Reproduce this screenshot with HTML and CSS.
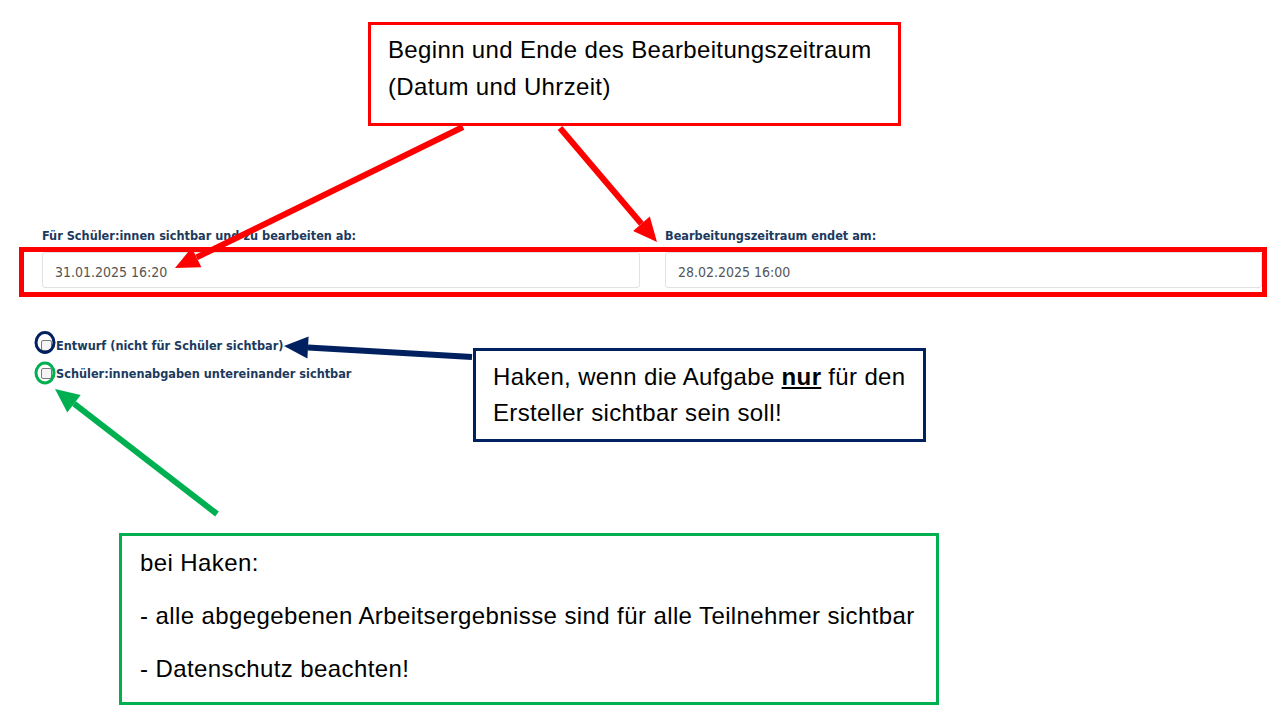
FILE: index.html
```html
<!DOCTYPE html>
<html lang="de">
<head>
    <meta charset="UTF-8">
    <meta name="viewport" content="width=device-width, initial-scale=1.0">
    <title>Bearbeitungszeitraum</title>
    <link rel="stylesheet" href="styles.css">
</head>
<body>
    <!-- Formular -->
    <div class="form">
        <div class="dates">
            <div class="field">
                <label for="start">Für Schüler:innen sichtbar und zu bearbeiten ab:</label>
                <input type="text" id="start" value="31.01.2025 16:20">
            </div>
            <div class="field">
                <label for="end">Bearbeitungszeitraum endet am:</label>
                <input type="text" id="end" value="28.02.2025 16:00">
            </div>
        </div>

        <div class="checks">
            <label class="check"><input type="checkbox">Entwurf (nicht für Schüler sichtbar)</label>
            <label class="check"><input type="checkbox">Schüler:innenabgaben untereinander sichtbar</label>
        </div>
    </div>

    <!-- Hinweise -->
    <div class="note note-red note-top">
        <p>Beginn und Ende des Bearbeitungszeitraum<br>(Datum und Uhrzeit)</p>
    </div>
    <div class="frame-red"></div>
    <div class="note note-navy">
        <p>Haken, wenn die Aufgabe <b><u>nur</u></b> für den<br>Ersteller sichtbar sein soll!</p>
    </div>
    <div class="note note-green">
        <p>bei Haken:</p>
        <p>- alle abgegebenen Arbeitsergebnisse sind für alle Teilnehmer sichtbar</p>
        <p>- Datenschutz beachten!</p>
    </div>

    <!-- Pfeile -->
    <svg class="arrows" width="1276" height="727" viewBox="0 0 1276 727">
        <g stroke-linecap="butt">
            <line x1="463" y1="127" x2="196.6" y2="257.4" stroke="#ff0000" stroke-width="6"/>
            <polygon points="175,268 191.7,247.6 201.4,267.3" fill="#ff0000"/>

            <line x1="560" y1="128" x2="641.4" y2="223.7" stroke="#ff0000" stroke-width="6"/>
            <polygon points="657,242 633.1,230.9 649.8,216.6" fill="#ff0000"/>

            <line x1="472" y1="357" x2="308" y2="347.4" stroke="#002060" stroke-width="6"/>
            <polygon points="284,346 308.6,336.4 307.4,358.4" fill="#002060"/>

            <line x1="217" y1="514" x2="74" y2="403.7" stroke="#00b050" stroke-width="6"/>
            <polygon points="55,389 80.7,395 67.3,412.4" fill="#00b050"/>
        </g>
        <ellipse cx="45" cy="342.5" rx="9" ry="10" fill="none" stroke="#002060" stroke-width="3"/>
        <ellipse cx="45" cy="373" rx="9" ry="10" fill="none" stroke="#00b050" stroke-width="3"/>
    </svg>
</body>
</html>
```

FILE: styles.css
```css
body {
    margin: 0;
    padding: 0;
    background: #fff;
    font-family: 'DejaVu Sans Condensed', 'DejaVu Sans', sans-serif;
    position: relative;
    width: 1276px;
    height: 727px;
    overflow: hidden;
}

/* Formular */
.form {
    padding: 228px 14px 0 42px;
}

.dates {
    display: grid;
    grid-template-columns: 598px 597px;
    column-gap: 25px;
}

.field label {
    display: block;
    font-size: 12.6px;
    line-height: 15px;
    font-weight: bold;
    color: #1c3a5e;
    margin-bottom: 9px;
    white-space: nowrap;
}

.field input {
    box-sizing: border-box;
    width: 100%;
    height: 36px;
    padding: 3px 12px 0;
    border: 1px solid #e2e2e2;
    border-radius: 3px;
    font-family: inherit;
    font-size: 14px;
    color: #555;
    background: #fff;
}

.checks {
    padding-top: 50px;
    display: flex;
    flex-direction: column;
    gap: 13px;
}

.check {
    display: flex;
    align-items: center;
    font-size: 12.6px;
    line-height: 15px;
    font-weight: bold;
    color: #1c3a5e;
}

.check input {
    appearance: none;
    box-sizing: border-box;
    margin: 0 4px 0 -1px;
    width: 11px;
    height: 11px;
    border: 1px solid #7a7a7a;
    border-radius: 2px;
    background: #f4f4f4;
}

/* Hinweise */
.note {
    position: absolute;
    box-sizing: border-box;
    border: 3px solid;
    background: #fff;
    font-family: 'Liberation Sans', Arial, sans-serif;
    font-size: 24px;
    letter-spacing: 0.35px;
    color: #000;
}

.note p {
    margin: 0;
}

.note-top {
    left: 368px;
    top: 22px;
    width: 533px;
    height: 104px;
    border-color: #ff0000;
    padding: 6px 0 0 17px;
    line-height: 37px;
}

.frame-red {
    position: absolute;
    left: 19px;
    top: 247px;
    width: 1248px;
    height: 50px;
    box-sizing: border-box;
    border: 5px solid #ff0000;
}

.note-navy {
    left: 473px;
    top: 348px;
    width: 453px;
    height: 94px;
    border-color: #002060;
    padding: 8px 0 0 17px;
    line-height: 36px;
}

.note-green {
    left: 119px;
    top: 533px;
    width: 820px;
    height: 172px;
    border-color: #00b050;
    padding: 13px 0 0 18px;
    line-height: 27px;
    letter-spacing: 0.4px;
}

.note-green p {
    margin-bottom: 26px;
}

.arrows {
    position: absolute;
    left: 0;
    top: 0;
    pointer-events: none;
}
```
